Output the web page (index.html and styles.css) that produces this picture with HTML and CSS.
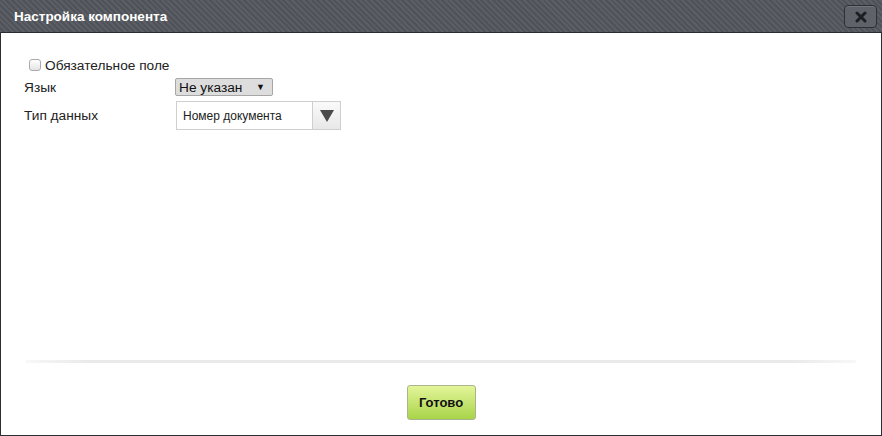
FILE: index.html
```html
<!DOCTYPE html>
<html lang="ru">
<head>
    <meta charset="UTF-8">
    <title>Настройка компонента</title>
    <link rel="stylesheet" href="styles.css">
</head>
<body>
    <div class="dialog">
        <div class="dialog-header">
            <span class="dialog-title">Настройка компонента</span>
            <button class="close-btn" title="Закрыть">
                <svg width="12" height="12" viewBox="0 0 12 12">
                    <path d="M2 2 L10 10 M10 2 L2 10" stroke="#1e1f22" stroke-width="3" stroke-linecap="round"/>
                </svg>
            </button>
        </div>
        <div class="dialog-body">
            <label class="check-row">
                <input type="checkbox" class="check">
                <span>Обязательное поле</span>
            </label>
            <div class="form-row">
                <span class="form-label">Язык</span>
                <div class="small-select">
                    <span>Не указан</span>
                    <span class="small-arrow">▼</span>
                </div>
            </div>
            <div class="form-row">
                <span class="form-label">Тип данных</span>
                <div class="big-select">
                    <span class="big-value">Номер документа</span>
                    <span class="big-arrow">
                        <svg width="14" height="12" viewBox="0 0 14 12">
                            <path d="M0 0 H14 L7 12 Z" fill="#4a4a4a"/>
                        </svg>
                    </span>
                </div>
            </div>
        </div>
        <div class="dialog-footer">
            <div class="separator"></div>
            <button class="done-btn">Готово</button>
        </div>
    </div>
</body>
</html>
```

FILE: styles.css
```css
html, body {
    margin: 0;
    height: 100%;
}
body {
    font-family: "Liberation Sans", Arial, sans-serif;
    font-size: 13.7px;
    color: #222;
    background: #fff;
}
.dialog {
    box-sizing: border-box;
    height: 100vh;
    border: 1px solid #2c2f34;
    border-top: none;
    display: flex;
    flex-direction: column;
}
.dialog-header {
    height: 32px;
    flex: none;
    display: flex;
    align-items: center;
    justify-content: space-between;
    padding: 0 5px 0 14px;
    background: repeating-linear-gradient(45deg, #5b5e64 0 2px, #4f5258 2px 4px);
    border-bottom: 1px solid #2a2d31;
    margin: 0 -1px;
}
.dialog-title {
    color: #fff;
    font-weight: bold;
    font-size: 13.5px;
    padding-top: 1px;
}
.close-btn {
    width: 33px;
    height: 23px;
    margin-top: 1px;
    border: 1px solid #2e3035;
    border-radius: 4px;
    background: #5f6268;
    box-shadow: inset 0 1px 0 rgba(255, 255, 255, 0.12);
    display: flex;
    align-items: center;
    justify-content: center;
    padding: 0;
}
.dialog-body {
    flex: 1;
    padding: 24px 0 0 23px;
}
.check-row {
    display: flex;
    align-items: center;
    gap: 4px;
    padding-left: 5px;
    height: 16px;
}
.check {
    width: 12px;
    height: 12px;
    margin: 0;
    border: 1px solid #aaa;
    border-radius: 3px;
    appearance: none;
    background: linear-gradient(#fff, #e4e4e4);
}
.form-row {
    display: flex;
    align-items: center;
    margin-top: 5px;
}
.form-row + .form-row {
    margin-top: 5px;
}
.form-label {
    width: 151px;
}
.small-select {
    box-sizing: border-box;
    width: 98px;
    height: 18px;
    border: 1px solid #a6a6a6;
    border-radius: 2px;
    background: #dddddd;
    display: flex;
    align-items: center;
    justify-content: space-between;
    padding: 0 7px 0 3px;
    color: #111;
}
.small-arrow {
    font-size: 9px;
}
.big-select {
    box-sizing: border-box;
    width: 165px;
    height: 29px;
    margin-left: 1px;
    border: 1px solid #cfcfcf;
    display: flex;
    align-items: stretch;
}
.big-value {
    flex: 1;
    display: flex;
    align-items: center;
    padding-left: 6px;
    font-size: 12px;
    color: #222;
}
.big-arrow {
    width: 27px;
    border-left: 1px solid #cfcfcf;
    background: linear-gradient(#fafafa, #e8e8e8);
    display: flex;
    align-items: center;
    justify-content: center;
}
.dialog-footer {
    flex: none;
    display: flex;
    flex-direction: column;
    align-items: center;
    padding-bottom: 15px;
}
.separator {
    align-self: stretch;
    height: 3px;
    margin: 0 25px 22px;
    background: linear-gradient(90deg, rgba(230, 230, 230, 0.3), #e9e9e9 8%, #e9e9e9 92%, rgba(230, 230, 230, 0.3));
}
.done-btn {
    width: 69px;
    height: 35px;
    border: 1px solid #a9b48f;
    border-radius: 3px;
    background: linear-gradient(#e3f59a, #a8d448);
    font-family: "Liberation Sans", Arial, sans-serif;
    font-weight: bold;
    font-size: 13px;
    color: #111;
    padding: 0;
}
```
